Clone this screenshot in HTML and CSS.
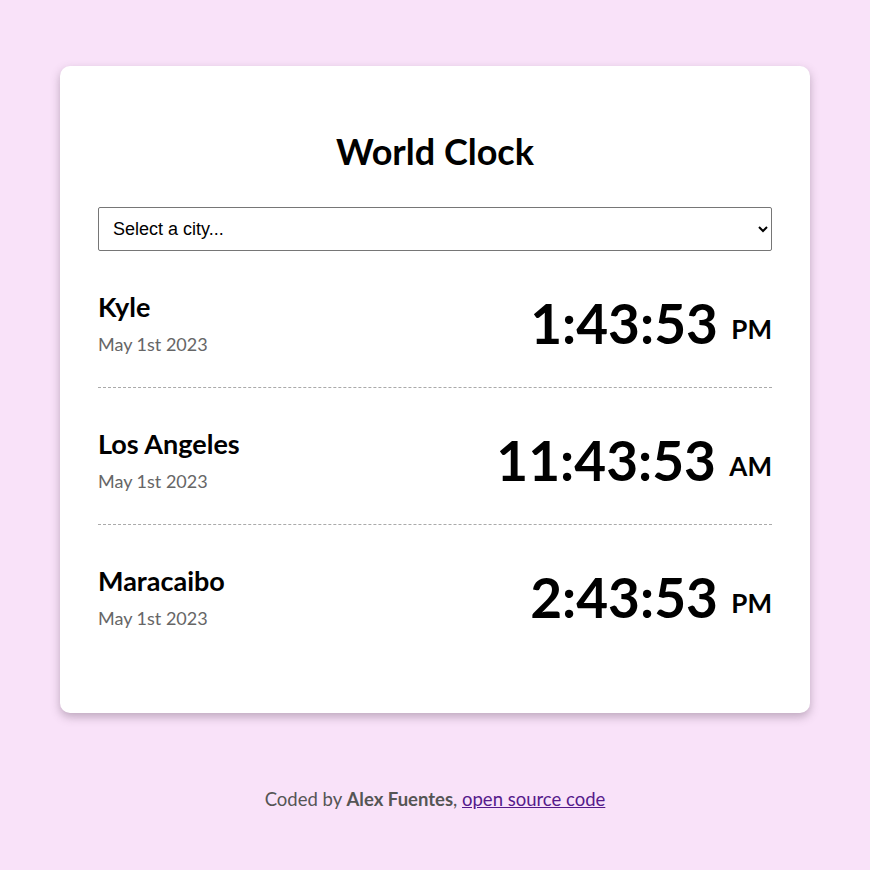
FILE: index.html
```html
<!DOCTYPE html>
<html lang="en">
<head>
<meta charset="utf-8">
<title>World Clock</title>
<link rel="stylesheet" href="styles.css">
</head>
<body>
<div class="container">
  <h1 class="title">World Clock</h1>
  <select class="city-select">
    <option>Select a city...</option>
  </select>
  <div class="cities">
    <div class="city">
      <div class="info">
        <h2 class="name">Kyle</h2>
        <div class="date">May 1st 2023</div>
      </div>
      <div class="time">1:43:53 <small class="ampm">PM</small></div>
    </div>
    <div class="city">
      <div class="info">
        <h2 class="name">Los Angeles</h2>
        <div class="date">May 1st 2023</div>
      </div>
      <div class="time">11:43:53 <small class="ampm">AM</small></div>
    </div>
    <div class="city">
      <div class="info">
        <h2 class="name">Maracaibo</h2>
        <div class="date">May 1st 2023</div>
      </div>
      <div class="time">2:43:53 <small class="ampm">PM</small></div>
    </div>
  </div>
</div>
<footer class="footer">Coded by <strong>Alex Fuentes</strong>, <a class="link" href="#">open source code</a></footer>
</body>
</html>
```
FILE: styles.css
```css
body {
  margin: 0;
  background: #f9e2f9;
  font-family: Lato, "Open Sans", sans-serif;
}
.container {
  width: 674px;
  margin: 66px auto 0;
  background: #fff;
  padding: 64px 38px 52px;
  border-radius: 10px;
  box-shadow: 0 4px 10px rgba(80, 60, 80, 0.35);
}
.title {
  text-align: center;
  font-size: 36px;
  font-weight: 700;
  margin: 0 0 34px;
  line-height: 1.2;
}
.city-select {
  display: block;
  width: 100%;
  height: 44px;
  font-family: "Liberation Sans", Arial, sans-serif;
  font-size: 18px;
  padding: 0 10px;
  border: 1px solid #767676;
  border-radius: 2px;
  background: #fff;
  color: #000;
}
.city {
  display: flex;
  justify-content: space-between;
  align-items: center;
  padding: 40px 0 32px;
  border-bottom: 1px dashed #aaa;
}
.city:last-child {
  border-bottom: none;
}
.name {
  margin: 0;
  font-size: 27px;
  font-weight: 700;
  line-height: 1.2;
}
.date {
  margin-top: 10px;
  font-size: 18px;
  line-height: 1.2;
  color: #666;
}
.time {
  font-size: 55px;
  font-weight: 700;
  line-height: 1;
}
.ampm {
  font-size: 26px;
  vertical-align: 20%;
}
.footer {
  text-align: center;
  margin-top: 75px;
  font-size: 18.5px;
  color: #555;
}
.link {
  color: #551a8b;
}
```
